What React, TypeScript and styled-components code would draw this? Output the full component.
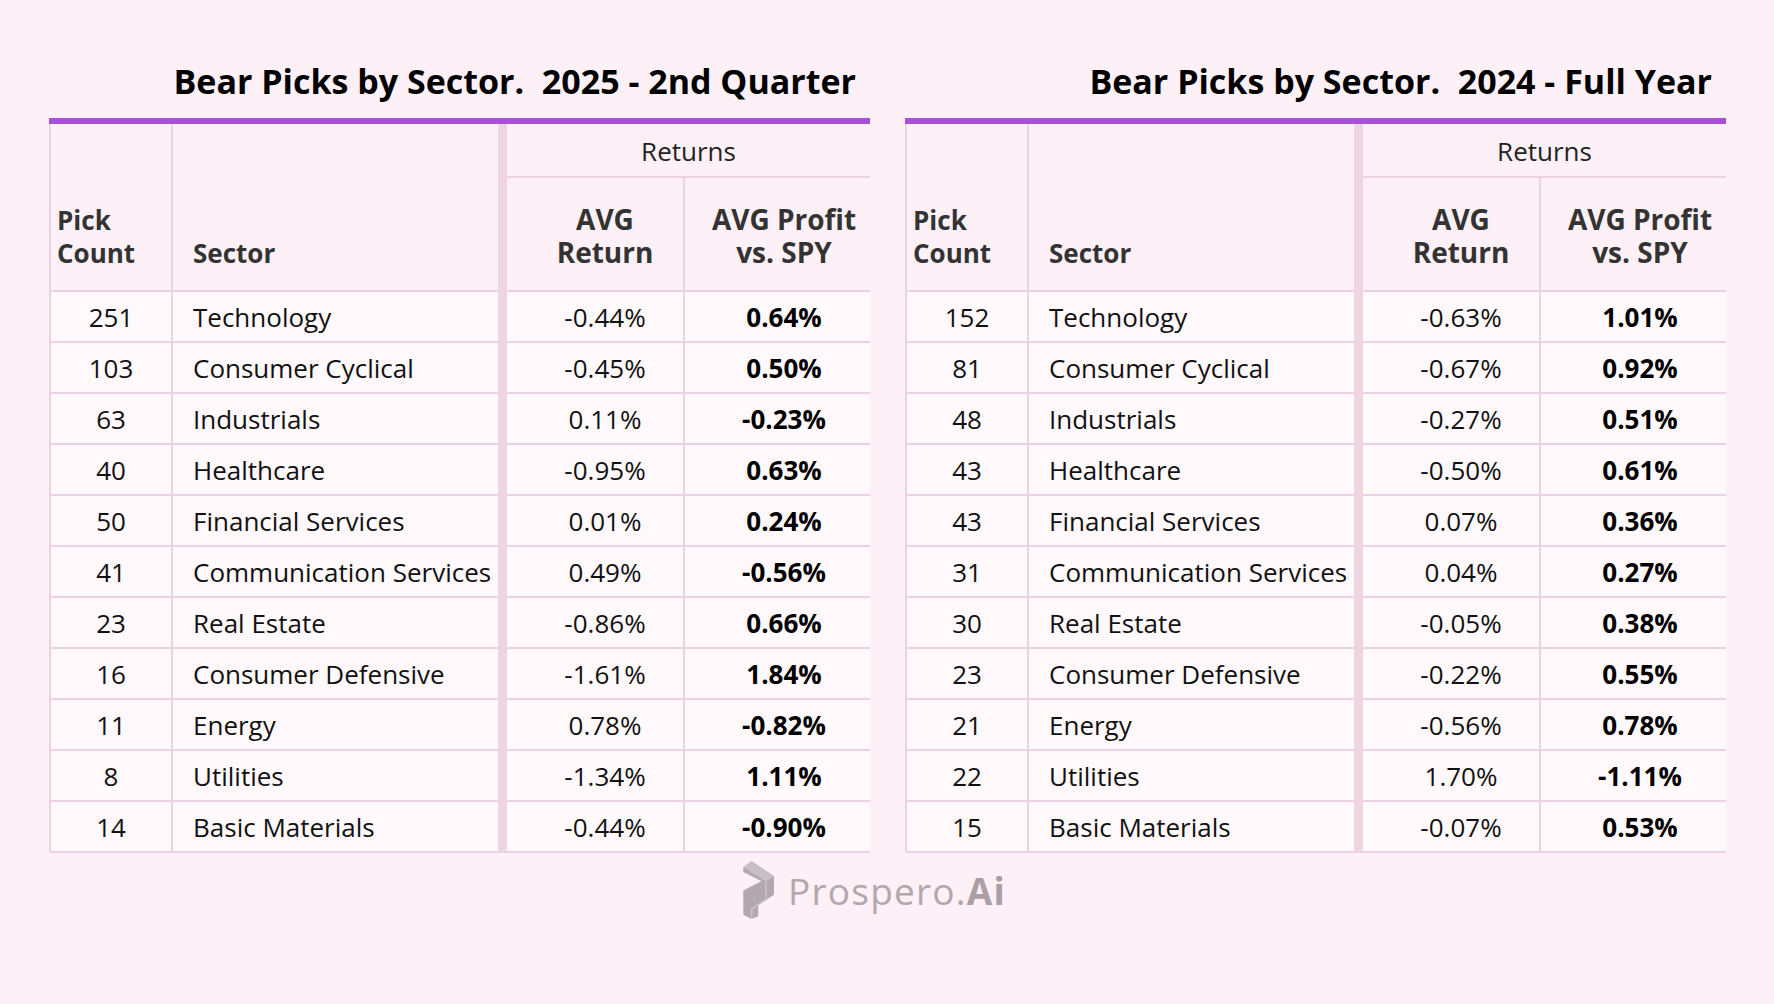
import React from 'react';
import styled, { createGlobalStyle, css } from 'styled-components';

const GlobalStyle = createGlobalStyle`
	html, body {
		margin: 0;
		padding: 0;
		background: #fdf0f6;
	}
	body {
		font-family: 'Open Sans', 'Noto Sans', sans-serif;
	}
`;

type Row = [number, string, string, string];

const q2: Row[] = [
	[251, 'Technology', '-0.44%', '0.64%'],
	[103, 'Consumer Cyclical', '-0.45%', '0.50%'],
	[63, 'Industrials', '0.11%', '-0.23%'],
	[40, 'Healthcare', '-0.95%', '0.63%'],
	[50, 'Financial Services', '0.01%', '0.24%'],
	[41, 'Communication Services', '0.49%', '-0.56%'],
	[23, 'Real Estate', '-0.86%', '0.66%'],
	[16, 'Consumer Defensive', '-1.61%', '1.84%'],
	[11, 'Energy', '0.78%', '-0.82%'],
	[8, 'Utilities', '-1.34%', '1.11%'],
	[14, 'Basic Materials', '-0.44%', '-0.90%'],
];

const fullYear: Row[] = [
	[152, 'Technology', '-0.63%', '1.01%'],
	[81, 'Consumer Cyclical', '-0.67%', '0.92%'],
	[48, 'Industrials', '-0.27%', '0.51%'],
	[43, 'Healthcare', '-0.50%', '0.61%'],
	[43, 'Financial Services', '0.07%', '0.36%'],
	[31, 'Communication Services', '0.04%', '0.27%'],
	[30, 'Real Estate', '-0.05%', '0.38%'],
	[23, 'Consumer Defensive', '-0.22%', '0.55%'],
	[21, 'Energy', '-0.56%', '0.78%'],
	[22, 'Utilities', '1.70%', '-1.11%'],
	[15, 'Basic Materials', '-0.07%', '0.53%'],
];

const Page = styled.div`
	padding: 58px 48px 0 49px;
	min-height: 1004px;
	box-sizing: border-box;
`;

const Tables = styled.div`
	display: flex;
	gap: 35px;
`;

const Panel = styled.section`
	width: 821px;
`;

const Title = styled.h2`
	margin: 0 0 14px;
	padding-right: 14px;
	text-align: right;
	font-size: 34px;
	line-height: 46px;
	font-weight: 700;
	color: #000;
	white-space: pre;
`;

const Grid = styled.div`
	display: grid;
	grid-template-columns: 124px 334px 178px 185px;
	grid-template-rows: 54px 114px repeat(11, 51px);
	border-top: 6px solid #a94fdc;
`;

const line = '#ecd3e1';

const colBorders = (col: number) => {
	if (col === 1)
		return css`
			border-left: 2px solid ${line};
			border-right: 2px solid ${line};
		`;
	if (col === 2)
		return css`
			border-right: 9px solid #edd5e2;
		`;
	if (col === 3)
		return css`
			border-right: 2px solid ${line};
		`;
	return css``;
};

type HeadProps = {
	$col: number;
	$rows?: number;
	$cols?: number;
	$align: 'left' | 'center';
	$pad: number;
	$bottom?: number;
	$size?: number;
	$middle?: boolean;
	$bold?: boolean;
};

const HeadCell = styled.div<HeadProps>`
	box-sizing: border-box;
	display: flex;
	align-items: ${(p) => (p.$middle ? 'center' : 'flex-end')};
	justify-content: ${(p) => (p.$align === 'left' ? 'flex-start' : 'center')};
	text-align: ${(p) => p.$align};
	grid-row: span ${(p) => p.$rows || 1};
	grid-column: span ${(p) => p.$cols || 1};
	padding: ${(p) => (p.$middle ? 2 : 0)}px 0 ${(p) => p.$bottom || 0}px ${(p) => p.$pad}px;
	background: #fdf1f7;
	border-bottom: 2px solid ${line};
	${(p) => colBorders(p.$col)}
	font-size: ${(p) => p.$size || 26}px;
	line-height: 33px;
	font-weight: ${(p) => (p.$bold ? 700 : 400)};
	color: ${(p) => (p.$bold ? '#333' : '#222')};
`;

const Cell = styled.div<{ $col: number; $align: 'left' | 'center'; $pad: number; $bold?: boolean }>`
	box-sizing: border-box;
	display: flex;
	align-items: center;
	justify-content: ${(p) => (p.$align === 'left' ? 'flex-start' : 'center')};
	padding-left: ${(p) => p.$pad}px;
	background: #fff9fc;
	border-bottom: 2px solid ${line};
	${(p) => colBorders(p.$col)}
	font-size: 26px;
	font-weight: ${(p) => (p.$bold ? 700 : 400)};
	color: ${(p) => (p.$bold ? '#000' : '#111')};
	white-space: nowrap;
`;

const Footer = styled.div`
	display: flex;
	justify-content: center;
	align-items: center;
	gap: 12px;
	margin-top: 7px;
	padding-right: 27px;
`;

const Brand = styled.span`
	font-family: 'Open Sans', sans-serif;
	font-size: 37px;
	letter-spacing: 1.2px;
	color: #b3a7ad;
	b {
		font-weight: 700;
		color: #ab9fa5;
	}
`;

const Logo = () => (
	<svg width="34" height="60" viewBox="0 0 34 60">
		<path d="M1.3 7.3 L9.7 1.3 L32 16.3 L32 34.7 L16.3 45.3 L16.3 56.3 L9.7 59 L1.3 54.7 L1.3 30.7 L19.7 21.3 L1.3 12 Z" fill="#b3a8ae" />
		<path d="M1.3 7.3 L9.7 1.3 L32 16.3 L24 21.5 Z" fill="#c8bec3" />
		<path d="M24 21.5 L24 39.5 L9.7 49 L9.7 59" fill="none" stroke="#d3cacf" strokeWidth="1.2" />
		<path d="M1.3 30.7 L19.7 21.3" fill="none" stroke="#c5bbc0" strokeWidth="1" />
	</svg>
);

const SectorTable: React.FC<{ title: string; rows: Row[] }> = ({ title, rows }) => (
	<Panel>
		<Title>{title}</Title>
		<Grid>
			<HeadCell $col={1} $rows={2} $align='left' $pad={6} $bottom={20} $bold>
				Pick
				<br />
				Count
			</HeadCell>
			<HeadCell $col={2} $rows={2} $align='left' $pad={20} $bottom={20} $bold>
				Sector
			</HeadCell>
			<HeadCell $col={4} $cols={2} $align='center' $pad={0} $middle>
				Returns
			</HeadCell>
			<HeadCell $col={3} $align='center' $pad={20} $bottom={21} $size={28} $bold>
				AVG
				<br />
				Return
			</HeadCell>
			<HeadCell $col={4} $align='center' $pad={13} $bottom={21} $size={28} $bold>
				AVG Profit
				<br />
				vs. SPY
			</HeadCell>
			{rows.map(([count, sector, ret, profit]) => (
				<React.Fragment key={sector}>
					<Cell $col={1} $align='center' $pad={0}>
						{count}
					</Cell>
					<Cell $col={2} $align='left' $pad={20}>
						{sector}
					</Cell>
					<Cell $col={3} $align='center' $pad={20}>
						{ret}
					</Cell>
					<Cell $col={4} $align='center' $pad={13} $bold>
						{profit}
					</Cell>
				</React.Fragment>
			))}
		</Grid>
	</Panel>
);

const App: React.FC = () => (
	<Page>
		<GlobalStyle />
		<Tables>
			<SectorTable title='Bear Picks by Sector.  2025 - 2nd Quarter' rows={q2} />
			<SectorTable title='Bear Picks by Sector.  2024 - Full Year' rows={fullYear} />
		</Tables>
		<Footer>
			<Logo />
			<Brand>
				Prospero.<b>Ai</b>
			</Brand>
		</Footer>
	</Page>
);

export default App;
